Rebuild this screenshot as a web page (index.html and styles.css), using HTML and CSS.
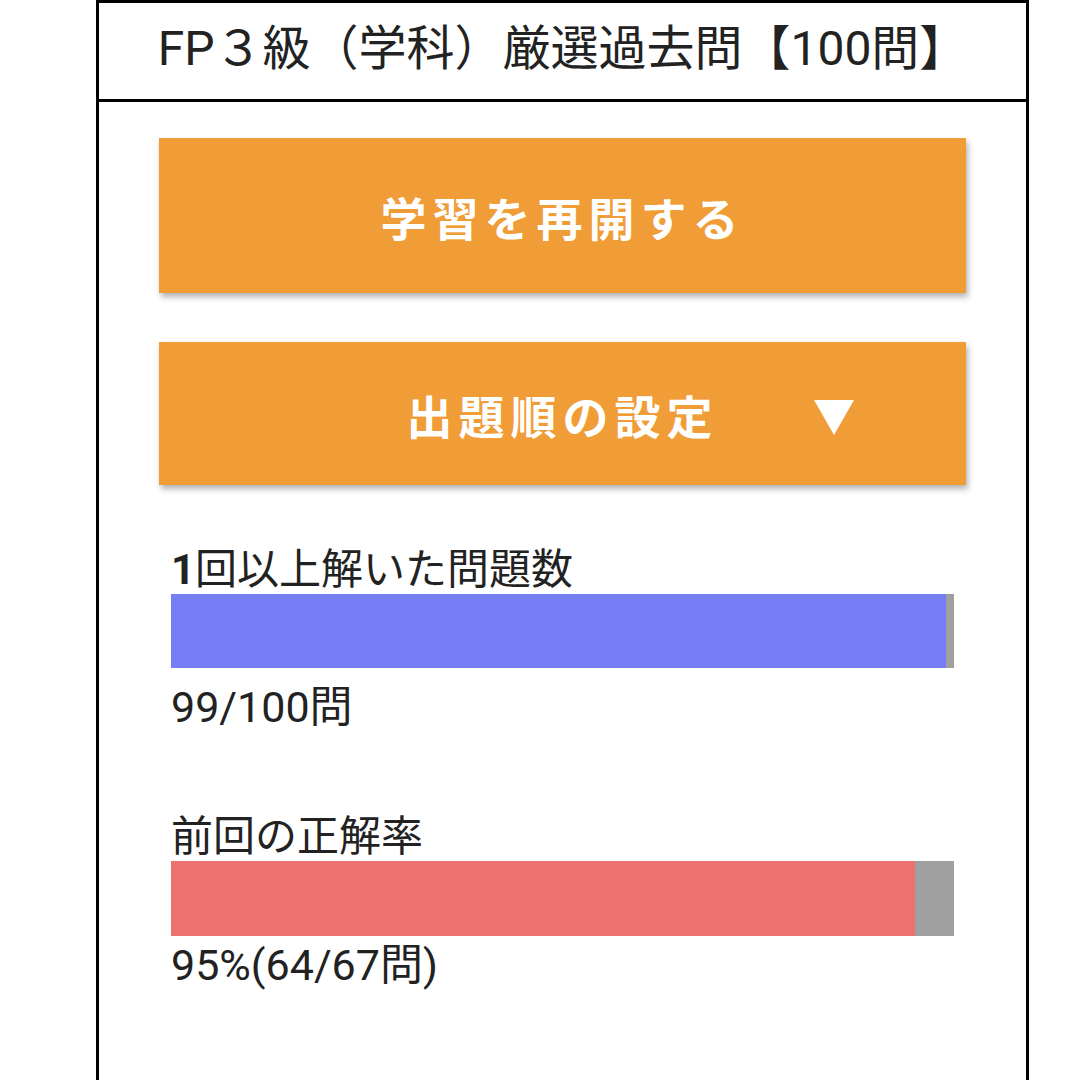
FILE: index.html
```html
<!DOCTYPE html>
<html lang="ja">
  <head>
    <meta charset="utf-8">
    <meta name="viewport" content="width=device-width, initial-scale=1">
    <title>FP３級（学科）厳選過去問【100問】</title>
    <link rel="stylesheet" href="styles.css">
  </head>

  <body>

    <div class="panel">

      <div class="titleBar">
        <h1 class="title">FP３級（学科）厳選過去問【100問】</h1>
      </div>

      <div class="menu">
        <button class="orangeButton resumeButton">学習を再開する</button>

        <button class="orangeButton orderButton">
          出題順の設定
          <svg class="arrowDown" width="40" height="35" viewBox="0 0 40 35">
            <polygon points="0,0 40,0 20,35" fill="#ffffff"/>
          </svg>
        </button>
      </div>

      <div class="stats">
        <div class="stat firstStat">
          <p class="statLabel"><b>1</b>回以上解いた問題数</p>
          <div class="bar">
            <div class="barFill solved" style="width: 99%"></div>
          </div>
          <p class="statValue">99/100問</p>
        </div>

        <div class="stat secondStat">
          <p class="statLabel">前回の正解率</p>
          <div class="bar">
            <div class="barFill correct" style="width: 95%"></div>
          </div>
          <p class="statValue">95%(64/67問)</p>
        </div>
      </div>

    </div>

  </body>
</html>
```

FILE: styles.css
```css
body{
  margin: 0;
  background-color: #ffffff;
  font-family: Roboto, "Noto Sans CJK JP", sans-serif;
  color: #222222;
  text-spacing-trim: space-all;
}

.panel{
  margin-left: 96px;
  width: 927px;
  min-height: 1077px;
  border: 3px solid #000000;
  border-bottom: none;
}

.titleBar{
  height: 82px;
  padding-bottom: 14px;
  border-bottom: 3px solid #000000;
  display: flex;
  align-items: center;
  justify-content: center;
}

.title{
  margin: 0;
  font-size: 48px;
  font-weight: normal;
  color: #222222;
}

.menu{
  padding: 36px 60px 0;
}

.orangeButton{
  position: relative;
  display: flex;
  align-items: center;
  justify-content: center;
  width: 100%;
  border: none;
  border-radius: 0;
  padding: 0;
  background-color: #F09C37;
  color: #ffffff;
  font-family: Roboto, "Noto Sans CJK JP", sans-serif;
  font-size: 46px;
  font-weight: bold;
  letter-spacing: 6px;
  box-shadow: 2px 4px 6px rgba(0, 0, 0, 0.3);
}

.resumeButton{
  height: 155px;
}

.orderButton{
  height: 143px;
  margin-top: 49px;
}

.arrowDown{
  position: absolute;
  right: 112px;
  top: 50%;
  transform: translateY(-40%);
}

.stats{
  padding: 0 72px;
}

.stat p{
  margin: 0;
  font-size: 42px;
  line-height: 49px;
}

.stat .statValue{
  font-size: 43px;
}

.firstStat{
  margin-top: 60px;
}

.secondStat{
  margin-top: 80px;
}

.bar{
  display: flex;
  height: 74px;
  background-color: #A0A0A0;
}

.secondStat .bar{
  height: 75px;
}

.barFill{
  height: 100%;
}

.solved{
  background-color: #767EF5;
}

.correct{
  background-color: #EC716F;
}

.firstStat .statValue{
  margin-top: 15px;
}

.secondStat .statValue{
  margin-top: 5px;
}
```
